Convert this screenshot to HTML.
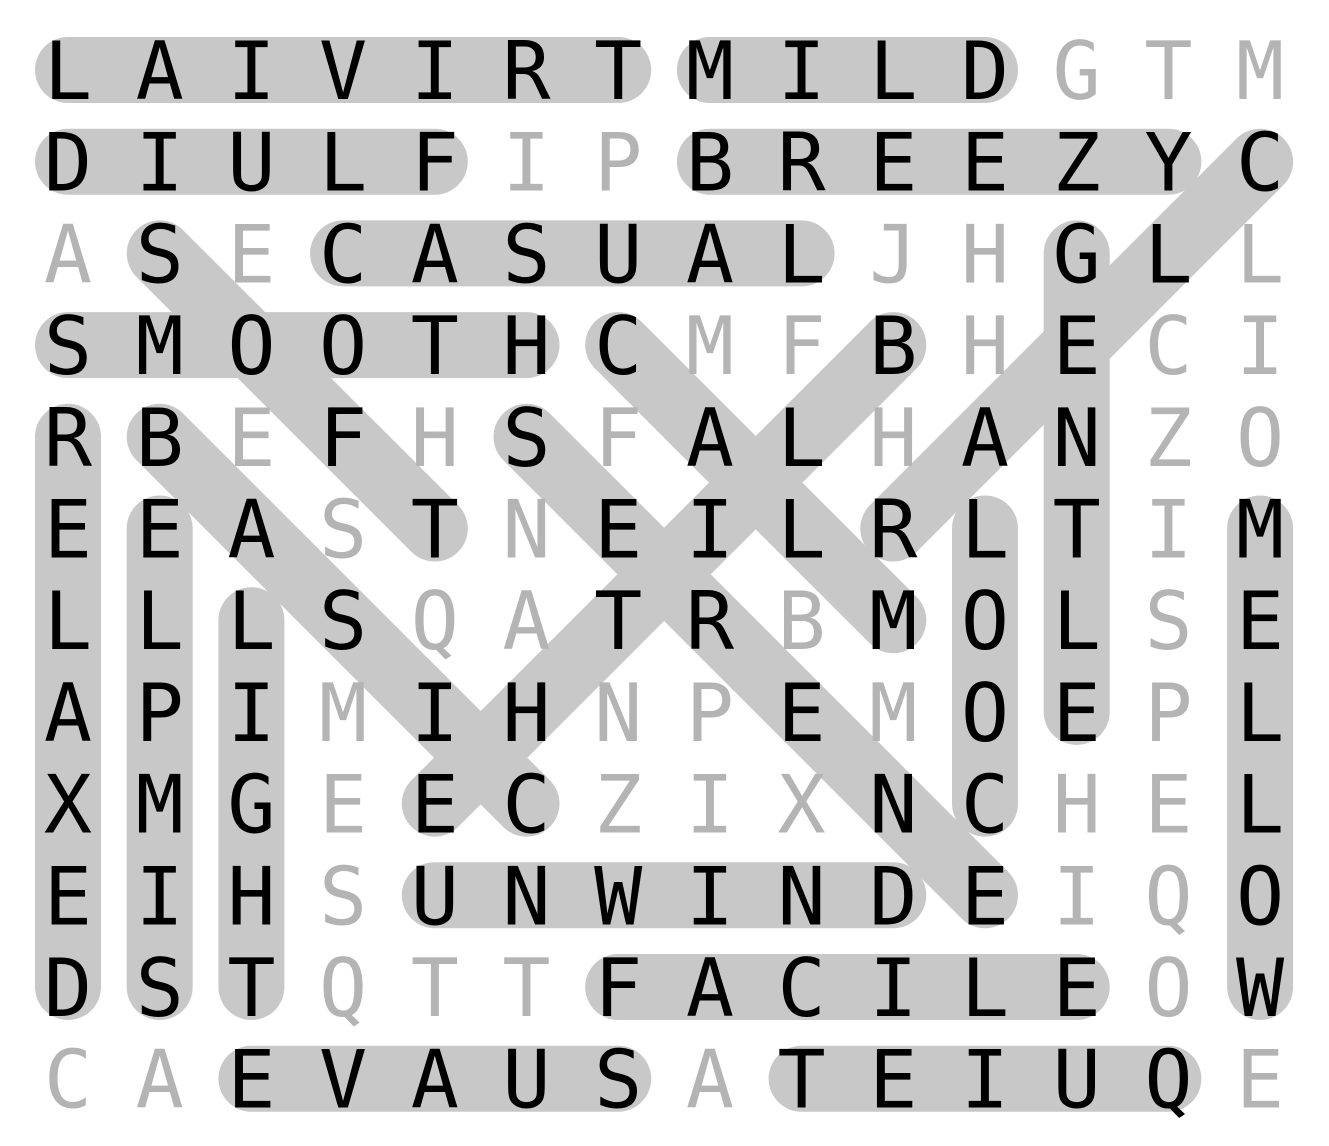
<!DOCTYPE html>
<html><head><meta charset="utf-8"><style>
html,body{margin:0;padding:0;background:#fff;}
svg{display:block}
</style></head><body>
<svg width="1329" height="1146" viewBox="0 0 1329 1146" xmlns="http://www.w3.org/2000/svg">
<g id="hl" stroke="#c8c8c8" stroke-width="66" stroke-linecap="round" fill="none"></g>
<g id="tx" font-family="'DejaVu Sans Mono','Liberation Mono',monospace" font-size="80" text-anchor="middle"></g>
</svg>
<script>
var rows=["LAIVIRTMILDGTM","DIULFIPBREEZYC","ASECASUALJHGLL","SMOOTHCMFBHECI","RBEFHSFALHANZO","EEASTNEILRLTIM","LLLSQATRBMOLSE","APIMIHNPEMOEPL","XMGEECZIXNCHEL","EIHSUNWINDEIQO","DSTQTTFACILEOW","CAEVAUSATEIUQE"];
var segs=[[0,0,6,0],[7,0,10,0],[0,1,4,1],[7,1,12,1],[3,2,8,2],[0,3,5,3],[0,4,0,10],[1,5,1,10],[2,6,2,10],[10,5,10,8],[11,2,11,7],[13,5,13,10],[4,9,9,9],[6,10,11,10],[2,11,6,11],[8,11,12,11],[1,2,4,5],[1,4,5,8],[5,4,10,9],[6,3,9,6],[13,1,9,5],[9,3,4,8]];
function X(c){return 68+91.7*c}function Y(r){return 70+91.7*r}
var found={};var ns="http://www.w3.org/2000/svg";
var hl=document.getElementById('hl'),tx=document.getElementById('tx');
segs.forEach(function(s){
 var l=document.createElementNS(ns,'line');
 l.setAttribute('x1',X(s[0]));l.setAttribute('y1',Y(s[1]));l.setAttribute('x2',X(s[2]));l.setAttribute('y2',Y(s[3]));
 hl.appendChild(l);
 var n=Math.max(Math.abs(s[2]-s[0]),Math.abs(s[3]-s[1]));
 var dx=Math.sign(s[2]-s[0]),dy=Math.sign(s[3]-s[1]);
 for(var i=0;i<=n;i++)found[(s[0]+dx*i)+','+(s[1]+dy*i)]=1;
});
for(var r=0;r<rows.length;r++)for(var c=0;c<14;c++){
 var t=document.createElementNS(ns,'text');
 t.setAttribute('x',X(c));t.setAttribute('y',Y(r)+29);
 t.setAttribute('fill',found[c+','+r]?'#000':'#b4b4b4');
 t.textContent=rows[r][c];tx.appendChild(t);
}
</script>
</body></html>
